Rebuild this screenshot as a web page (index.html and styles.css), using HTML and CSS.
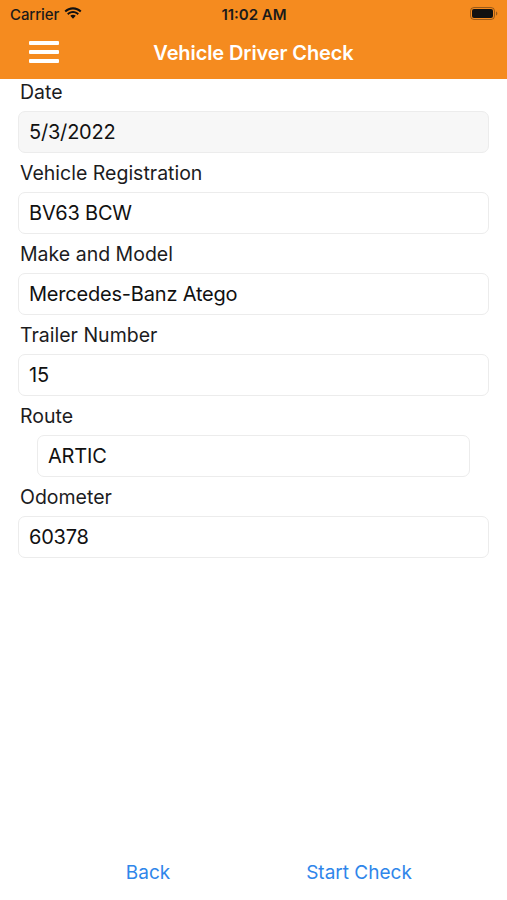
FILE: index.html
```html
<!DOCTYPE html>
<html>
<head>
<meta charset="utf-8">
<link rel="stylesheet" href="styles.css">
</head>
<body>
<div class="app">
  <header class="topbar">
    <div class="status">
      <div class="status-left">
        <span class="carrier">Carrier</span>
        <svg class="wifi" width="17" height="12" viewBox="0 0 17 12">
          <path d="M8.5 2.2c2.6 0 4.9 1 6.7 2.7l1.3-1.4C14.4 1.4 11.6.2 8.5.2S2.6 1.4.5 3.5l1.3 1.4C3.6 3.2 5.9 2.2 8.5 2.2z" fill="#111"/>
          <path d="M8.5 5.6c1.6 0 3.1.6 4.3 1.7l1.3-1.4C12.6 4.5 10.6 3.6 8.5 3.6S4.4 4.5 2.9 5.9l1.3 1.4c1.2-1.1 2.7-1.7 4.3-1.7z" fill="#111"/>
          <path d="M8.5 7.1c-1 0-1.9.4-2.6 1l2.6 2.8 2.6-2.8c-.7-.6-1.6-1-2.6-1z" fill="#111"/>
        </svg>
      </div>
      <span class="time">11:02 AM</span>
      <div class="status-right">
        <svg class="battery" width="28" height="13" viewBox="0 0 28 13">
          <rect x="0.5" y="0.5" width="24" height="12" rx="3.5" fill="none" stroke="#111" stroke-opacity="0.4"/>
          <rect x="2" y="2" width="21" height="9" rx="2" fill="#111"/>
          <path d="M26 4.5v4c.8-.3 1.3-1.1 1.3-2s-.5-1.7-1.3-2z" fill="#111" fill-opacity="0.4"/>
        </svg>
      </div>
    </div>
    <div class="navbar">
      <div class="menu">
        <span></span><span></span><span></span>
      </div>
      <h1 class="title">Vehicle Driver Check</h1>
    </div>
  </header>

  <main class="form">
    <div class="field">
      <label class="label">Date</label>
      <div class="input disabled">5/3/2022</div>
    </div>
    <div class="field">
      <label class="label">Vehicle Registration</label>
      <div class="input">BV63 BCW</div>
    </div>
    <div class="field">
      <label class="label">Make and Model</label>
      <div class="input">Mercedes-Banz Atego</div>
    </div>
    <div class="field">
      <label class="label">Trailer Number</label>
      <div class="input">15</div>
    </div>
    <div class="field">
      <label class="label">Route</label>
      <div class="input indented">ARTIC</div>
    </div>
    <div class="field">
      <label class="label">Odometer</label>
      <div class="input">60378</div>
    </div>
  </main>

  <footer class="actions">
    <a class="action">Back</a>
    <a class="action">Start Check</a>
  </footer>
</div>
</body>
</html>
```

FILE: styles.css
```css
* { box-sizing: border-box; }
html, body { margin: 0; padding: 0; }
body {
  font-family: Inter, "Liberation Sans", sans-serif;
  background: #ffffff;
  color: #1c1c1e;
}
.app {
  width: 507px;
  height: 900px;
  display: flex;
  flex-direction: column;
}
.topbar {
  background: #f58b1f;
  height: 79px;
  display: flex;
  flex-direction: column;
}
.status {
  height: 28px;
  display: flex;
  align-items: center;
  justify-content: space-between;
  padding: 0 9px 0 10px;
}
.status-left {
  display: flex;
  align-items: center;
  gap: 5px;
  width: 130px;
}
.status-right {
  width: 130px;
  display: flex;
  justify-content: flex-end;
}
.carrier {
  font-size: 15px;
  font-weight: 500;
  color: #1a1a1a;
  letter-spacing: -0.1px;
}
.wifi { margin-top: -2px; width: 18px; height: 13px; }
.time {
  font-size: 15px;
  font-weight: 600;
  color: #1a1a1a;
}
.battery { display: block; margin-top: -1px; }
.navbar {
  flex: 1;
  display: flex;
  align-items: center;
  justify-content: center;
  position: relative;
  padding-bottom: 2px;
}
.menu {
  position: absolute;
  left: 29px;
  top: 13px;
  display: flex;
  flex-direction: column;
  gap: 5px;
}
.menu span {
  display: block;
  width: 30px;
  height: 4px;
  background: #ffffff;
  border-radius: 1px;
}
.title {
  margin: 0;
  font-size: 20px;
  font-weight: 600;
  color: #ffffff;
  letter-spacing: -0.1px;
}
.form {
  flex: 1;
  display: flex;
  flex-direction: column;
  padding: 1px 18px 0 18px;
}
.field {
  display: flex;
  flex-direction: column;
  margin-bottom: 8px;
}
.label {
  font-size: 19.5px;
  line-height: 24px;
  padding-left: 2px;
  margin-bottom: 7px;
  color: #1c1c1e;
}
.input {
  height: 42px;
  border: 1px solid #ececec;
  border-radius: 7px;
  background: #ffffff;
  display: flex;
  align-items: center;
  padding: 0 10px;
  font-size: 20px;
  color: #111;
  letter-spacing: -0.2px;
}
.input.disabled { background: #f7f7f7; }
.input.indented {
  margin-left: 19px;
  margin-right: 19px;
}
.actions {
  display: flex;
  height: 50px;
  padding: 6px 0 0 78px;
  gap: 71px;
  align-items: flex-start;
}
.action {
  width: 140px;
  text-align: center;
  font-size: 19px;
  color: #2f86ea;
  line-height: 34px;
}
```
